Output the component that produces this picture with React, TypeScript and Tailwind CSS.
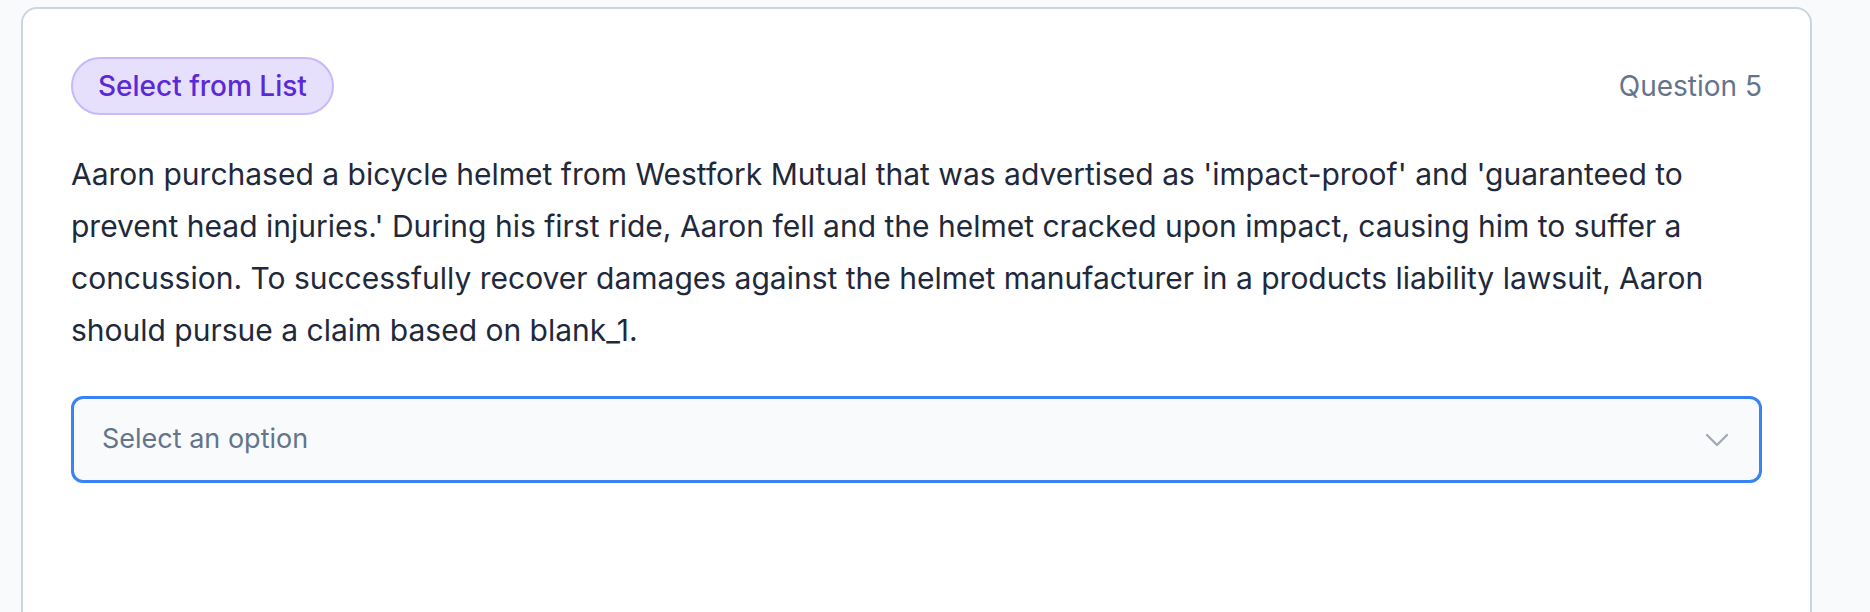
import { ChevronDown } from "lucide-react";

const question =
  "Aaron purchased a bicycle helmet from Westfork Mutual that was advertised as 'impact-proof' and 'guaranteed to prevent head injuries.' During his first ride, Aaron fell and the helmet cracked upon impact, causing him to suffer a concussion. To successfully recover damages against the helmet manufacturer in a products liability lawsuit, Aaron should pursue a claim based on blank_1.";

export default function App() {
  return (
    <div
      className="h-[612px] overflow-hidden bg-[#f8fafc] pl-[21px] pt-[7px]"
      style={{ fontFamily: "Inter, 'Noto Sans', sans-serif" }}
    >
      <div className="h-[700px] w-[1791px] rounded-[16px] border-2 border-[#cbd5e1] bg-white px-[48px] pt-[48px]">
        <div className="flex items-center justify-between">
          <span className="inline-flex h-[58px] items-center rounded-full border-2 border-[#c8b9f9] bg-[#e6e0fd] px-[25px] text-[28px] font-medium text-[#5b2ad6]">
            Select from List
          </span>
          <span className="text-[28px] text-[#64748b]">Question 5</span>
        </div>

        <p className="mt-[33px] text-[30px] leading-[52px] text-[#1e293b]">{question}</p>

        <button
          type="button"
          className="mt-[40px] flex h-[87px] w-full items-center justify-between rounded-[12px] border-[3px] border-[#3b82f6] bg-[#f8fafc] pl-[28px] pr-[22px] text-left"
        >
          <span className="text-[27px] text-[#64748b]">Select an option</span>
          <ChevronDown size={40} strokeWidth={1.4} className="text-[#a3aab5]" />
        </button>
      </div>
    </div>
  );
}
